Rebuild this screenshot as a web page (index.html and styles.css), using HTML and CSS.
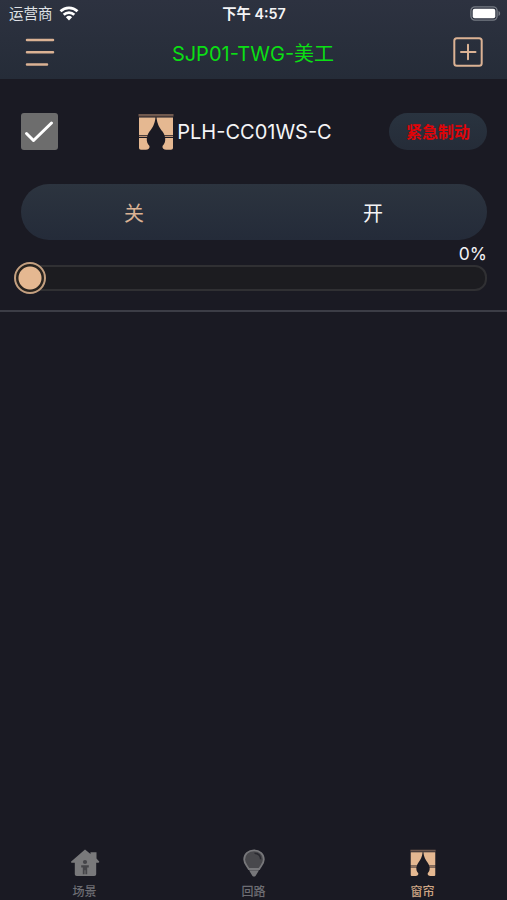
FILE: index.html
```
<!DOCTYPE html>
<html lang="zh-CN">
<head>
  <meta charset="UTF-8" />
  <meta name="viewport" content="width=device-width, initial-scale=1" />
  <title>SJP01-TWG-美工</title>
  <link rel="stylesheet" href="styles.css">
</head>
<body>
  <svg width="0" height="0" class="sprite">
    <symbol id="curtain" viewBox="0 0 36 38" preserveAspectRatio="none">
      <path fill="#70594e" d="M.5 1h35v2.500H.5z"/>
      <path fill="#e5b891" d="M1 4.500h16.500C16.800 11 14.500 15 11.500 18.500Q10 20.500 9.500 22.300H1zM35 4.500H18.500C19.200 11 21.500 15 24.500 18.500Q26 20.500 26.500 22.300H35z"/>
      <path fill="#b98f73" d="M1 23.100h8.200v1H1zM26.800 23.100H35v1h-8.200z"/>
      <path fill="#e5b891" d="M1 25h7.800c-.2 3.500.5 5.500 2.700 8 .3 2.500-1.200 3.800-3.700 3.800H3c-1.300 0-2-.7-2-2zM35 25h-7.800c.2 3.500-.5 5.500-2.700 8-.3 2.500 1.200 3.800 3.700 3.800H33c1.300 0 2-.7 2-2z"/>
    </symbol>
  </svg>

  <header class="header">
    <div class="status">
      <div class="carrier">
        <span>运营商</span>
        <svg width="20" height="15" viewBox="0 0 20 15" fill="none" stroke="#fff" stroke-width="2.700">
          <path d="M1.500 5.300a12.200 12.200 0 0 1 17 0"/>
          <path d="M4.700 8.700a7.600 7.600 0 0 1 10.600 0"/>
          <path fill="#fff" stroke="none" d="M10 14.400l-3.100-3.200a4.500 4.500 0 0 1 6.200 0z"/>
        </svg>
      </div>
      <div class="time">下午 4:57</div>
      <svg class="battery" width="31" height="15" viewBox="0 0 31 15">
        <rect x=".9" y=".9" width="26.200" height="13.200" rx="4" fill="none" stroke="#767b84" stroke-width="1.300"/>
        <rect x="2.700" y="2.700" width="22.600" height="9.600" rx="2" fill="#fff"/>
        <path fill="#767b84" d="M28.500 5c2.200 1 2.200 4 0 5z"/>
      </svg>
    </div>
    <div class="nav">
      <svg width="30" height="30" viewBox="0 0 30 30" stroke="#dbb294" stroke-width="2.500" stroke-linecap="round">
        <path d="M2 3h26M2 15.200h26M2 27.400h20"/>
      </svg>
      <h1 class="title">SJP01-TWG-美工</h1>
      <svg width="30" height="30" viewBox="0 0 30 30" fill="none" stroke="#dbb294" stroke-width="2">
        <rect x="1.300" y="1.300" width="27.400" height="27.400" rx="2.500"/>
        <path stroke-linecap="round" d="M8 15h14.500M15 7.700v14.600"/>
      </svg>
    </div>
  </header>

  <main class="device">
    <div class="device-head">
      <div class="check">
        <svg width="37" height="37" viewBox="0 0 37 37" fill="none" stroke="#fff" stroke-width="3" stroke-linecap="round" stroke-linejoin="round">
          <path d="M5.500 20.500l7 7L30.500 10"/>
        </svg>
      </div>
      <div class="device-name">
        <svg width="36" height="38"><use href="#curtain"/></svg>
        <span>PLH-CC01WS-C</span>
      </div>
      <button class="stop">紧急制动</button>
    </div>
    <div class="switch">
      <span class="active">关</span>
      <span>开</span>
    </div>
    <div class="percent">0%</div>
    <div class="track">
      <div class="knob"></div>
    </div>
  </main>

  <nav class="tabs">
    <div class="tab">
      <svg width="30" height="28" viewBox="0 0 30 28">
        <path fill="#79797b" d="M15 .5l5.500 4.500V3.200h6v6.300l2.700 3.100c.3.700-.1 1.200-.8 1.200h-2.200V25c0 1.300-.7 2-2 2H6.800c-1.300 0-2-.7-2-2V13.800H1.700c-.7 0-1-.6-.5-1.200z"/>
        <circle cx="15" cy="13" r="2.100" fill="#454549"/>
        <path fill="#454549" d="M11.200 16.200h7.600v2.200h-1.600v6.800h-1.800v-4h-.8v4h-1.800v-6.800h-1.600z"/>
      </svg>
      <span>场景</span>
    </div>
    <div class="tab">
      <svg width="30" height="28" viewBox="0 0 30 28">
        <path fill="#48484c" stroke="#77777a" stroke-width="1.800" d="M15 1.300c-5.600 0-9.800 4-9.800 9.200 0 4 2.800 6 4.600 9.500h10.400c1.800-3.500 4.600-5.500 4.600-9.500 0-5.200-4.200-9.200-9.800-9.200z"/>
        <path fill="none" stroke="#29292f" stroke-width="1.500" d="M15.500 4.200c3.700.1 6 2.500 6.200 6"/>
        <path fill="#77777a" d="M10 21.200h10l-3.300 5.500c-.7 1.200-2.700 1.200-3.400 0z"/>
      </svg>
      <span>回路</span>
    </div>
    <div class="tab active">
      <svg width="26" height="28"><use href="#curtain"/></svg>
      <span>窗帘</span>
    </div>
  </nav>
</body>
</html>
```

FILE: styles.css
```
* {
  box-sizing: border-box;
}
body {
  margin: 0;
  height: 900px;
  display: flex;
  flex-direction: column;
  background: #1a1a23;
  color: #f4f4f6;
  font-family: Inter, "Noto Sans CJK SC", sans-serif;
  overflow: hidden;
}
svg {
  display: block;
  flex: none;
}
.sprite {
  position: absolute;
}
.header {
  height: 79px;
  background: linear-gradient(#2d3240, #252c38);
}
.status {
  height: 27px;
  padding: 0 6px 0 9px;
  display: grid;
  grid-template-columns: 1fr auto 1fr;
  align-items: center;
  font-size: 14.5px;
  line-height: 27px;
}
.carrier {
  display: flex;
  align-items: center;
  gap: 6px;
  color: #dfe1e6;
}
.time {
  margin-right: 2px;
  font-size: 14.3px;
  font-weight: 600;
}
.battery {
  justify-self: end;
}
.nav {
  height: 52px;
  padding: 0 24px 2px 25px;
  display: flex;
  align-items: center;
  justify-content: space-between;
}
.title {
  margin: 0 2px 0 0;
  color: #0bdf14;
  font-size: 20px;
  font-weight: 400;
  white-space: nowrap;
}
.device {
  height: 233px;
  padding: 34px 20px 0 21px;
  border-bottom: 2px solid #3c3d46;
}
.device-head {
  display: flex;
  align-items: center;
  justify-content: space-between;
  height: 37px;
}
.check {
  width: 37px;
  height: 37px;
  border-radius: 3px;
  background: #6d6d6d;
}
.device-name {
  display: flex;
  align-items: center;
  gap: 3px;
  margin-left: 23px;
  font-size: 20px;
  white-space: nowrap;
}
.stop {
  width: 98px;
  height: 37px;
  padding: 0 0 2px;
  border: 0;
  border-radius: 19px;
  background: linear-gradient(#29333f, #252c38);
  color: #e00408;
  font: bold 16px "Noto Sans CJK SC", sans-serif;
}
.switch {
  height: 56px;
  margin-top: 34px;
  padding: 0 104px 0 103px;
  display: flex;
  align-items: center;
  justify-content: space-between;
  border-radius: 28px;
  background: linear-gradient(#2c343f, #242b39);
  font-size: 20px;
}
.switch .active {
  color: #dbb294;
}
.percent {
  height: 25px;
  line-height: 27px;
  text-align: right;
  font-size: 17.5px;
}
.track {
  height: 26px;
  display: flex;
  align-items: center;
  border: 2px solid #303033;
  border-radius: 12px;
  background: #1c1c20;
}
.knob {
  flex: none;
  width: 32px;
  height: 32px;
  margin-left: -9px;
  border: 2px solid #c4a080;
  border-radius: 50%;
  background: radial-gradient(circle, #e5b891 11px, #29241f 12px);
}
.tabs {
  margin-top: auto;
  height: 51px;
  display: grid;
  grid-template-columns: repeat(3, 1fr);
  color: #6d6d73;
  font-size: 12px;
  font-weight: 500;
}
.tab {
  display: flex;
  flex-direction: column;
  align-items: center;
  line-height: 18px;
}
.tab span {
  margin-top: 6px;
}
.tab.active {
  color: #cfa685;
}
```
